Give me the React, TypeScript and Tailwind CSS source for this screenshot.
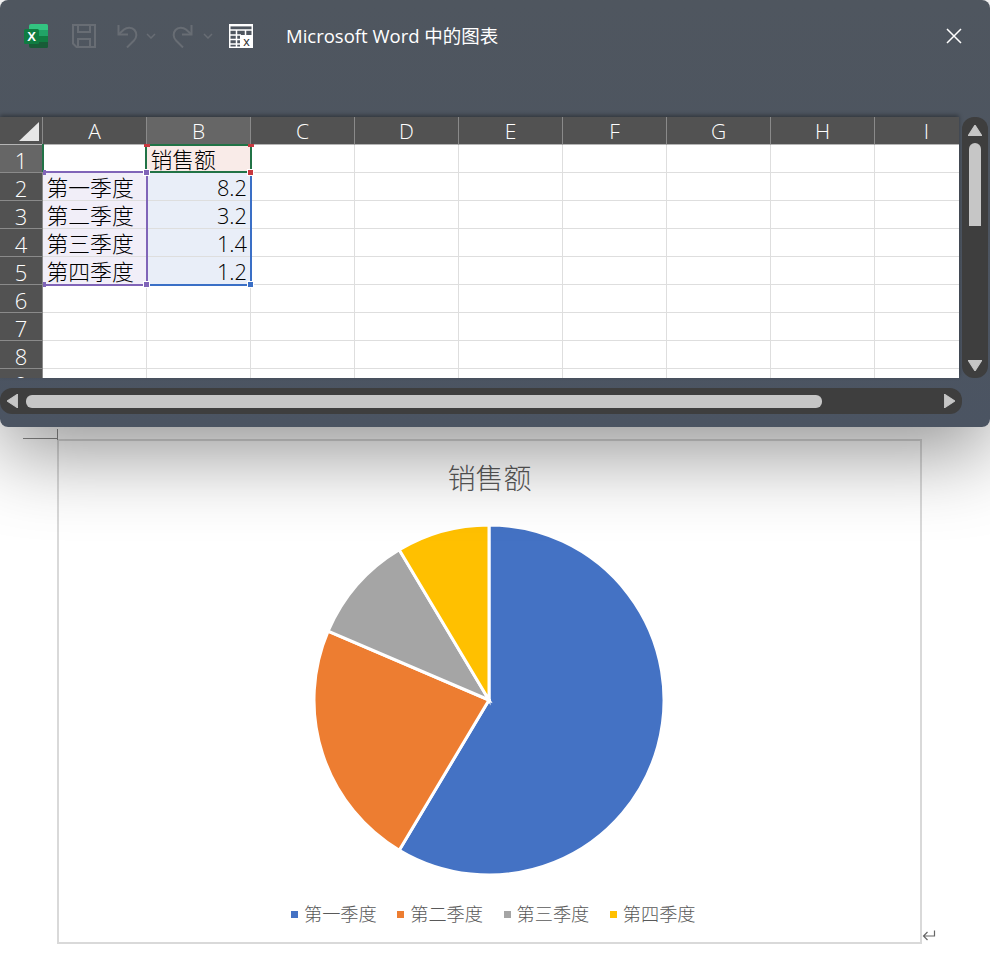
const columns = ['A', 'B', 'C', 'D', 'E', 'F', 'G', 'H', 'I']
const rows = [1, 2, 3, 4, 5, 6, 7, 8, 9]

const cells: Record<string, string> = {
  B1: '销售额',
  A2: '第一季度',
  B2: '8.2',
  A3: '第二季度',
  B3: '3.2',
  A4: '第三季度',
  B4: '1.4',
  A5: '第四季度',
  B5: '1.2',
}

const slices = [
  { name: '第一季度', value: 8.2, color: '#4472c4', legend: 'bg-[#4472c4]' },
  { name: '第二季度', value: 3.2, color: '#ed7d31', legend: 'bg-[#ed7d31]' },
  { name: '第三季度', value: 1.4, color: '#a5a5a5', legend: 'bg-[#a5a5a5]' },
  { name: '第四季度', value: 1.2, color: '#ffc000', legend: 'bg-[#ffc000]' },
]

function ExcelIcon() {
  return (
    <svg width="24" height="24" viewBox="0 0 24 24">
      <path d="M7 0h15.5A1.5 1.5 0 0 1 24 1.500V6H5V2a2 2 0 0 1 2-2z" fill="#33c481" />
      <rect x="5" y="6" width="19" height="6" fill="#21a366" />
      <rect x="5" y="12" width="19" height="6" fill="#107c41" />
      <path d="M5 18h19v4.500a1.500 1.500 0 0 1-1.500 1.500H7a2 2 0 0 1-2-2z" fill="#185c37" />
      <rect x="0" y="5" width="15" height="15" rx="1.500" fill="#107c41" />
      <text x="7.500" y="17" textAnchor="middle" fontSize="13" fontWeight="700" fill="#fff" fontFamily="'Liberation Sans', sans-serif">
        X
      </text>
    </svg>
  )
}

function SaveIcon() {
  return (
    <svg width="24" height="24" viewBox="0 0 24 24" fill="none" stroke="#686d74" strokeWidth="2">
      <path d="M1 1h22v22H4.500L1 19.500z" />
      <path d="M6 1v7h12V1" />
      <path d="M6 23v-8h12v8" />
    </svg>
  )
}

function UndoIcon() {
  return (
    <svg width="24" height="24" viewBox="0 0 24 24" fill="none" stroke="#686d74" strokeWidth="2">
      <path d="M2.500 1v9.500H12" />
      <path d="M2.500 10.500 8 5.500c3-2.500 8-2.500 10.500.5 2.500 3 2.500 7.500-.5 10.500l-7 7" />
    </svg>
  )
}

function Chevron() {
  return (
    <svg width="10" height="6" viewBox="0 0 10 6" fill="none" stroke="#686d74" strokeWidth="1.500">
      <path d="M1 1l4 4 4-4" />
    </svg>
  )
}

function SheetIcon() {
  return (
    <svg width="24" height="24" viewBox="0 0 24 24" fill="none" stroke="#fff" strokeWidth="1.500">
      <rect x="0.750" y="0.750" width="22.500" height="22.500" />
      <path d="M0 1.200h24" strokeWidth="2.400" />
      <path d="M0 6h24M0 11h12M0 15.500h12M0 20h12M7.500 6v18M16.500 6v5" />
      <rect x="11" y="11" width="13" height="13" fill="#fff" stroke="none" />
      <text x="17.500" y="21.500" textAnchor="middle" fontSize="13" fill="#333" stroke="none" fontFamily="'Liberation Sans', sans-serif">
        x
      </text>
    </svg>
  )
}

function Arrow({ dir }: { dir: 'up' | 'down' | 'left' | 'right' }) {
  const points = {
    up: '6.500,0 13,10 0,10',
    down: '0,0 13,0 6.500,10',
    left: '0,6.500 10,0 10,13',
    right: '0,0 10,6.500 0,13',
  }
  const horizontal = dir === 'left' || dir === 'right'
  return (
    <svg width={horizontal ? 11 : 14} height={horizontal ? 14 : 11} viewBox={horizontal ? '0 0 10 13' : '0 0 13 10'}>
      <polygon points={points[dir]} fill="#c6c6c6" stroke="#c6c6c6" strokeLinejoin="round" />
    </svg>
  )
}

function PieChart() {
  const total = slices.reduce((sum, s) => sum + s.value, 0)
  const c = 176
  const r = 175
  let angle = 0
  return (
    <svg width="352" height="352" viewBox="0 0 352 352">
      {slices.map((s) => {
        const start = angle
        angle += (s.value / total) * Math.PI * 2
        const x1 = c + r * Math.sin(start)
        const y1 = c - r * Math.cos(start)
        const x2 = c + r * Math.sin(angle)
        const y2 = c - r * Math.cos(angle)
        const large = angle - start > Math.PI ? 1 : 0
        return (
          <path
            key={s.name}
            d={`M${c} ${c}L${x1} ${y1}A${r} ${r} 0 ${large} 1 ${x2} ${y2}Z`}
            fill={s.color}
            stroke="#fff"
            strokeWidth="3"
          />
        )
      })}
    </svg>
  )
}

function Sheet() {
  return (
    <div className="relative h-[261px] w-[959px] overflow-hidden bg-white">
      <div className="flex h-[28px] w-[979px] bg-[#525252] text-[21px] leading-[26px] font-light text-white">
        <div className="relative h-full w-[43px] shrink-0 border-r border-b border-r-[#8a8a8a] border-b-[#b5b5b5]">
          <div className="absolute right-[3px] bottom-[3px] h-0 w-0 border-t-[19px] border-r-[20px] border-t-transparent border-r-[#e6e6e6]" />
        </div>
        {columns.map((col) => (
          <div
            key={col}
            className={`flex h-full w-[104px] shrink-0 items-center justify-center border-r border-b border-r-[#8a8a8a] border-b-[#b5b5b5] ${
              col === 'B' ? 'bg-[#666666]' : ''
            }`}
          >
            {col}
          </div>
        ))}
      </div>
      {rows.map((row) => (
        <div key={row} className="flex h-[28px] w-[979px]">
          <div
            className={`flex h-full w-[43px] shrink-0 items-center justify-center border-r border-b border-r-[#8a8a8a] border-b-[#8a8a8a] pt-[2px] text-[22px] leading-[24px] font-light text-white ${
              row === 1 ? 'bg-[#666666]' : 'bg-[#525252]'
            }`}
          >
            {row}
          </div>
          {columns.map((col) => {
            const id = `${col}${row}`
            const text = cells[id]
            const isNumber = col === 'B' && row > 1
            let fill = ''
            if (id === 'B1') fill = 'bg-[#f9ebe8]'
            if (col === 'A' && row > 1 && row < 6) fill = 'bg-[#f1eef8]'
            if (col === 'B' && row > 1 && row < 6) fill = 'bg-[#e9eef8]'
            return (
              <div
                key={id}
                className={`flex h-full w-[104px] shrink-0 items-center border-r border-b border-[#dedede] pt-[2px] pr-[3px] pl-[3.500px] text-[21.800px] leading-[24px] font-light whitespace-nowrap text-black ${fill} ${
                  isNumber ? 'justify-end' : ''
                }`}
              >
                {text}
              </div>
            )
          })}
        </div>
      ))}

      <div className="absolute top-[27px] left-[42px] h-[28px] w-[1.500px] bg-[#217346]" />
      <div className="absolute top-[27px] left-[145px] h-[29px] w-[107px] border-2 border-[#217346]" />
      <div className="absolute top-[54px] left-[43px] h-[115px] w-[105px] border-y-2 border-r-2 border-[#8064b8]" />
      <div className="absolute top-[56px] left-[148px] h-[113px] w-[104px] border-r-2 border-b-2 border-[#3a6fc6]" />
      <div className="absolute top-[27px] left-[144px] h-[3px] w-[6px] bg-[#c7383f]" />
      <div className="absolute top-[27px] left-[248px] h-[3px] w-[6px] bg-[#c7383f]" />
      <div className="absolute top-[52px] left-[247px] box-content h-[5px] w-[5px] border border-white bg-[#c7383f]" />
      <div className="absolute top-[52px] left-[143px] box-content h-[5px] w-[5px] border border-white bg-[#8064b8]" />
      <div className="absolute top-[53px] left-[43px] h-[5px] w-[3px] bg-[#8064b8]" />
      <div className="absolute top-[165px] left-[43px] h-[5px] w-[3px] bg-[#8064b8]" />
      <div className="absolute top-[164px] left-[143px] box-content h-[5px] w-[5px] border border-white bg-[#8064b8]" />
      <div className="absolute top-[164px] left-[247px] box-content h-[5px] w-[5px] border border-white bg-[#3a6fc6]" />
    </div>
  )
}

export default function App() {
  return (
    <div className="min-h-[957px] w-[990px] overflow-hidden bg-white font-['Open_Sans','Noto_Sans_CJK_SC',sans-serif]">
      <div className="relative z-10 h-[427px] w-[990px] rounded-[8px] bg-linear-to-b from-[#4f565f] to-[#4b5462] shadow-[0_26px_80px_rgba(0,0,0,0.42)]">
        <div className="flex h-[117px] items-start pt-[24px] pl-[24px] text-white">
          <ExcelIcon />
          <div className="ml-[24px]">
            <SaveIcon />
          </div>
          <div className="ml-[20px]">
            <UndoIcon />
          </div>
          <div className="mt-[9px] ml-[6px]">
            <Chevron />
          </div>
          <div className="ml-[14px] -scale-x-100">
            <UndoIcon />
          </div>
          <div className="mt-[9px] ml-[9px]">
            <Chevron />
          </div>
          <div className="ml-[16px]">
            <SheetIcon />
          </div>
          <div className="ml-[33px] flex h-[24px] items-center text-[18.500px] whitespace-nowrap">Microsoft Word 中的图表</div>
          <div className="mt-[4px] mr-[28px] ml-auto">
            <svg width="16" height="16" viewBox="0 0 16 16" fill="none" stroke="#fff" strokeWidth="1.500">
              <path d="M1 1l14 14M15 1 1 15" />
            </svg>
          </div>
        </div>

        <div className="flex h-[261px]">
          <div className="shadow-[0_-2px_4px_rgba(0,0,0,0.35)]">
            <Sheet />
          </div>
          <div className="ml-[3px] flex h-full w-[26px] flex-col items-center rounded-[12px] bg-[#3e3e3e] pt-[8px] pb-[7px]">
            <Arrow dir="up" />
            <div className="mt-[7px] h-[83px] w-[12px] rounded-t-[6px] bg-[#c6c6c6]" />
            <div className="mt-auto">
              <Arrow dir="down" />
            </div>
          </div>
        </div>

        <div className="mt-[10px] flex h-[26px] w-[962px] items-center rounded-[12px] bg-[#3e3e3e] pr-[7px] pl-[7px]">
          <Arrow dir="left" />
          <div className="ml-[8px] h-[13px] w-[796px] rounded-[6px] bg-[#c6c6c6]" />
          <div className="ml-auto">
            <Arrow dir="right" />
          </div>
        </div>
      </div>

      <div className="relative mt-[12px] ml-[57px] flex h-[505px] w-[865px] flex-col items-center border-2 border-[#d9d9d9]">
        <div className="absolute top-[-12px] left-[-2px] h-[11px] w-[1px] bg-[#8a8a8a]" />
        <div className="absolute top-[-3px] left-[-36px] h-[1px] w-[35px] bg-[#8a8a8a]" />
        <div className="mt-[19px] text-[28px] leading-[36px] font-light text-[#595959]">销售额</div>
        <div className="mt-[28px] mr-[1px]">
          <PieChart />
        </div>
        <div className="mt-[26px] ml-[7.500px] flex gap-[20.500px]">
          {slices.map((s) => (
            <div key={s.name} className="flex items-center gap-[6px] text-[18.200px] leading-[24px] font-light text-[#595959]">
              <div className={`h-[7px] w-[7px] ${s.legend}`} />
              {s.name}
            </div>
          ))}
        </div>
        <div className="absolute right-[-16px] bottom-[-1px]">
          <svg width="14" height="14" viewBox="0 0 14 14" fill="none" stroke="#666" strokeWidth="1.200">
            <path d="M12.500 1.500v5.500H1.500M5.500 3 1.500 7l4 4" />
          </svg>
        </div>
      </div>
    </div>
  )
}
